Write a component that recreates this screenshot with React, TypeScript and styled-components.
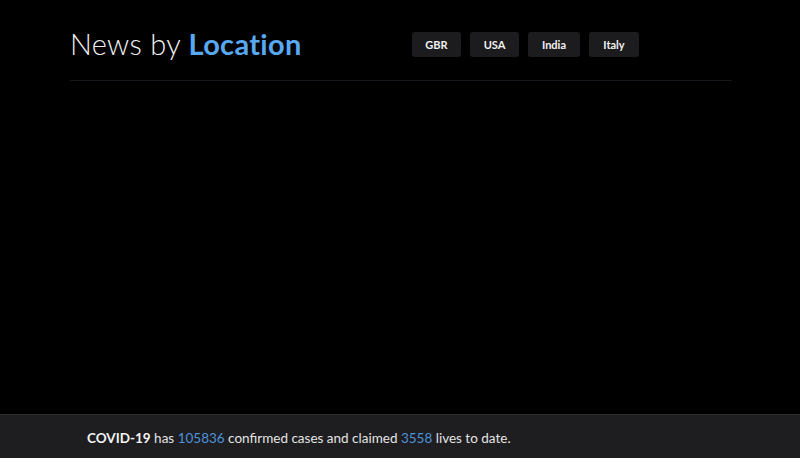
import { createGlobalStyle } from "styled-components";
import styled from "styled-components";

const GlobalStyle = createGlobalStyle`
  html, body {
    margin: 0;
    padding: 0;
    background: #000;
    height: 100%;
  }
  #root {
    min-height: 100vh;
    display: flex;
    flex-direction: column;
  }
`;

const Page = styled.div`
  flex: 1;
  display: flex;
  flex-direction: column;
  background: #000;
  font-family: "Lato", "Noto Sans", sans-serif;
  min-height: 458px;
`;

const Main = styled.main`
  flex: 1;
  width: 662px;
  margin-left: 70px;
`;

const Header = styled.header`
  display: flex;
  align-items: center;
  height: 81px;
  border-bottom: 1px solid #16161c;
  box-sizing: border-box;
  padding-top: 6px;
`;

const Title = styled.h1`
  margin: 0;
  width: 342px;
  font-family: "Lato", sans-serif;
  font-weight: 300;
  font-size: 29px;
  letter-spacing: 0.3px;
  color: #eeeeee;
`;

const Accent = styled.span`
  color: #58a8f2;
  font-weight: 700;
`;

const ButtonRow = styled.nav`
  display: flex;
  gap: 9px;
  margin-top: 3px;
`;

const CountryButton = styled.button<{ $w: number }>`
  width: ${(p) => p.$w}px;
  height: 25px;
  border: none;
  border-radius: 3px;
  background: #1c1b1e;
  color: #f2f2f2;
  font-family: "Lato", sans-serif;
  font-weight: 700;
  font-size: 11px;
  padding: 0;
  cursor: pointer;
`;

const Footer = styled.footer`
  height: 44px;
  background: #1e1d20;
  border-top: 1px solid #2c2b2f;
  box-sizing: border-box;
  display: flex;
  align-items: center;
  padding-left: 87px;
  padding-top: 2px;
  font-family: "Lato", sans-serif;
  font-size: 13.5px;
  color: #e4e4e4;
`;

const Strong = styled.strong`
  font-weight: 700;
  color: #f4f4f4;
`;

const Num = styled.span`
  color: #4d93db;
`;

const countries = [
  { name: "GBR", w: 49 },
  { name: "USA", w: 49 },
  { name: "India", w: 52 },
  { name: "Italy", w: 50 },
];

const App = () => {
  return (
    <>
      <GlobalStyle />
      <Page>
        <Main>
          <Header>
            <Title>
              News by <Accent>Location</Accent>
            </Title>
            <ButtonRow>
              {countries.map((c) => (
                <CountryButton key={c.name} $w={c.w}>
                  {c.name}
                </CountryButton>
              ))}
            </ButtonRow>
          </Header>
        </Main>
        <Footer>
          <span>
            <Strong>COVID-19</Strong> has <Num>105836</Num> confirmed cases and
            claimed <Num>3558</Num> lives to date.
          </span>
        </Footer>
      </Page>
    </>
  );
};

export default App;
